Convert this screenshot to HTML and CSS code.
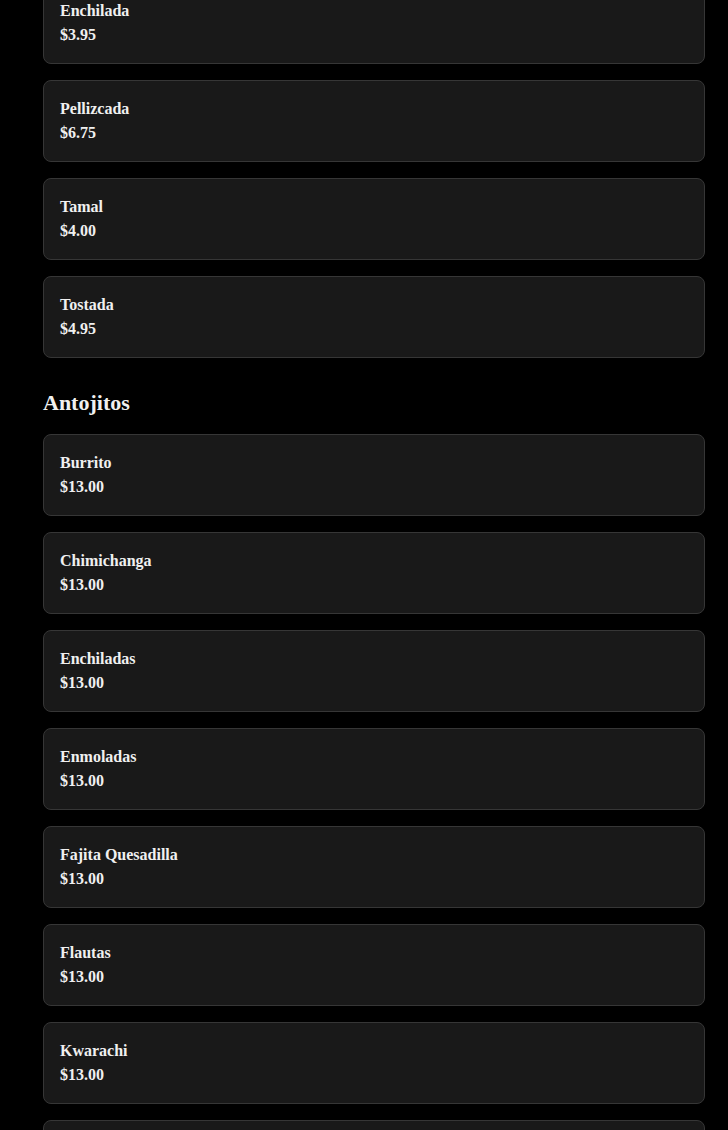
FILE: index.html
```html
<!DOCTYPE html>
<html>
<head>
<meta charset="utf-8">
<link rel="stylesheet" href="styles.css">
</head>
<body>
<main class="menu">
  <section class="section">
    <ul class="items">
      <li class="card"><div class="name">Enchilada</div><div class="price">$3.95</div></li>
      <li class="card"><div class="name">Pellizcada</div><div class="price">$6.75</div></li>
      <li class="card"><div class="name">Tamal</div><div class="price">$4.00</div></li>
      <li class="card"><div class="name">Tostada</div><div class="price">$4.95</div></li>
    </ul>
  </section>
  <section class="section">
    <h2 class="heading">Antojitos</h2>
    <ul class="items">
      <li class="card"><div class="name">Burrito</div><div class="price">$13.00</div></li>
      <li class="card"><div class="name">Chimichanga</div><div class="price">$13.00</div></li>
      <li class="card"><div class="name">Enchiladas</div><div class="price">$13.00</div></li>
      <li class="card"><div class="name">Enmoladas</div><div class="price">$13.00</div></li>
      <li class="card"><div class="name">Fajita Quesadilla</div><div class="price">$13.00</div></li>
      <li class="card"><div class="name">Flautas</div><div class="price">$13.00</div></li>
      <li class="card"><div class="name">Kwarachi</div><div class="price">$13.00</div></li>
      <li class="card"><div class="name">Quesadilla</div><div class="price">$13.00</div></li>
    </ul>
  </section>
</main>
</body>
</html>
```
FILE: styles.css
```css
html, body {
  margin: 0;
  padding: 0;
  background: #000;
}
body {
  font-family: "Liberation Serif", "Times New Roman", serif;
  color: #f0f0f0;
  overflow: hidden;
}
.menu {
  margin-top: -18px;
  padding: 0 23px 0 43px;
}
.items {
  list-style: none;
  margin: 0;
  padding: 0;
  display: flex;
  flex-direction: column;
  gap: 16px;
}
.card {
  background: #191919;
  border: 1px solid #363636;
  border-radius: 8px;
  padding: 16px;
  font-size: 16px;
  font-weight: bold;
  line-height: 24px;
}
.heading {
  font-size: 22px;
  font-weight: bold;
  line-height: 30px;
  margin: 30px 0 16px;
}
```
